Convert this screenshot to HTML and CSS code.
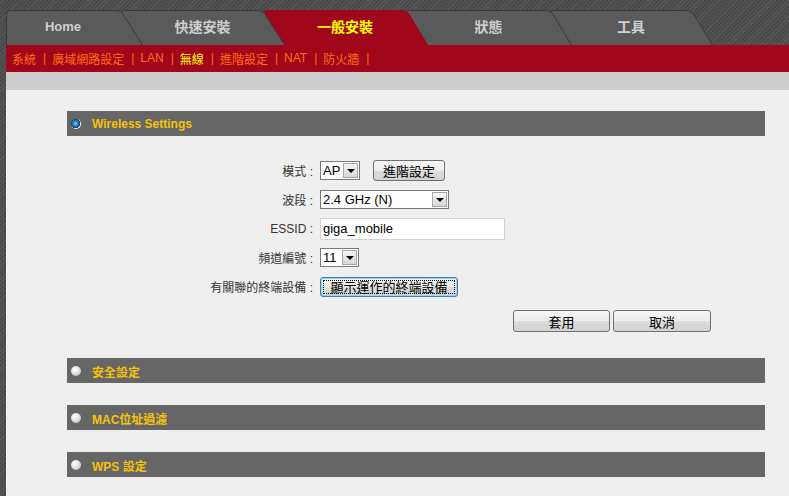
FILE: index.html
```html
<!DOCTYPE html>
<html lang="zh-Hant">
<head>
<meta charset="utf-8">
<title>一般安裝 - 無線</title>
<link rel="stylesheet" href="styles.css">
</head>
<body>
<div class="page">
  <nav class="tabs">
    <a class="tab tab-home">
      <svg class="tab-bg" width="137" height="35" viewBox="0 0 137 35"><path d="M0.5 35 V5 Q0.5 0.5 5 0.5 H110 Q115 0.5 117.5 5 L136.5 35" /></svg>
      <span class="tab-label">Home</span>
    </a>
    <a class="tab">
      <svg class="tab-bg" width="165" height="35" viewBox="0 0 165 35"><path d="M0.5 35 V5 Q0.5 0.5 5 0.5 H138 Q143 0.5 145.5 5 L164.5 35" /></svg>
      <span class="tab-label">快速安裝</span>
    </a>
    <a class="tab tab-active">
      <svg class="tab-bg" width="166" height="35" viewBox="0 0 166 35"><path d="M0.5 35 V5 Q0.5 0.5 5 0.5 H139 Q145 0.5 147.5 5 L165.5 35" /></svg>
      <span class="tab-label">一般安裝</span>
    </a>
    <a class="tab">
      <svg class="tab-bg" width="167" height="35" viewBox="0 0 167 35"><path d="M0.5 35 V5 Q0.5 0.5 5 0.5 H140 Q146 0.5 148.5 5 L166.5 35" /></svg>
      <span class="tab-label">狀態</span>
    </a>
    <a class="tab">
      <svg class="tab-bg" width="164" height="35" viewBox="0 0 164 35"><path d="M0.5 35 V5 Q0.5 0.5 5 0.5 H136 Q142 0.5 145 5 L163.5 35" /></svg>
      <span class="tab-label">工具</span>
    </a>
  </nav>

  <div class="subnav">
    <a class="sub">系統</a><span class="sep">|</span>
    <a class="sub">廣域網路設定</a><span class="sep">|</span>
    <a class="sub">LAN</a><span class="sep">|</span>
    <a class="sub sub-active">無線</a><span class="sep">|</span>
    <a class="sub">進階設定</a><span class="sep">|</span>
    <a class="sub">NAT</a><span class="sep">|</span>
    <a class="sub">防火牆</a><span class="sep">|</span>
  </div>

  <div class="graybar"></div>

  <main class="content">
    <section class="panel">
      <div class="panel-head"><span class="dot dot-on"></span><span class="panel-title">Wireless Settings</span></div>
      <div class="form">
        <div class="label">模式 :</div>
        <div class="ctrl">
          <span class="select select-ap"><span class="select-text">AP</span><span class="arrow"></span></span>
          <button class="btn btn-adv">進階設定</button>
        </div>

        <div class="label">波段 :</div>
        <div class="ctrl">
          <span class="select select-band"><span class="select-text">2.4 GHz (N)</span><span class="arrow"></span></span>
        </div>

        <div class="label">ESSID :</div>
        <div class="ctrl">
          <span class="input">giga_mobile</span>
        </div>

        <div class="label">頻道編號 :</div>
        <div class="ctrl">
          <span class="select select-ch"><span class="select-text">11</span><span class="arrow"></span></span>
        </div>

        <div class="label">有關聯的終端設備 :</div>
        <div class="ctrl">
          <button class="btn btn-focus"><span class="focus-ring">顯示運作的終端設備</span></button>
        </div>
      </div>
      <div class="actions">
        <button class="btn btn-act">套用</button>
        <button class="btn btn-act btn-cancel">取消</button>
      </div>
    </section>

    <section class="panel panel-closed">
      <div class="panel-head"><span class="dot"></span><span class="panel-title">安全設定</span></div>
    </section>
    <section class="panel panel-closed">
      <div class="panel-head"><span class="dot"></span><span class="panel-title">MAC位址過濾</span></div>
    </section>
    <section class="panel panel-closed">
      <div class="panel-head"><span class="dot"></span><span class="panel-title">WPS 設定</span></div>
    </section>
  </main>
</div>
</body>
</html>
```

FILE: styles.css
```css
* { box-sizing: border-box; }

html, body {
  margin: 0;
  padding: 0;
  width: 789px;
  height: 496px;
  overflow: hidden;
}

body {
  font-family: "Liberation Sans", Arial, "Noto Sans CJK TC", sans-serif;
  font-size: 12px;
  color: #333;
  background-color: #4c4c4c;
  background-image: repeating-linear-gradient(135deg, #4a4a4a 0px, #4a4a4a 2px, #585858 2px, #585858 3px);
}

.page {
  padding-left: 6px;
  height: 496px;
  display: flex;
  flex-direction: column;
}

/* ---------- tabs ---------- */
.tabs {
  display: flex;
  height: 35px;
  margin-top: 10px;
  flex: none;
}

.tab {
  position: relative;
  display: flex;
  align-items: center;
  justify-content: center;
  height: 35px;
  margin-left: -23px;
  padding: 0 23px 3px 23px;
  font-weight: bold;
  font-size: 14px;
  color: #cfcfcf;
  text-decoration: none;
  flex: none;
}
.tab:nth-child(1) { z-index: 5; width: 137px; margin-left: 0; padding-left: 0; font-size: 13px; }
.tab:nth-child(2) { z-index: 4; width: 165px; }
.tab:nth-child(3) { z-index: 3; width: 166px; }
.tab:nth-child(4) { z-index: 2; width: 167px; }
.tab:nth-child(5) { z-index: 1; width: 164px; }

.tab-bg {
  position: absolute;
  left: 0;
  top: 0;
  display: block;
}
.tab-bg path {
  fill: #5b5a5a;
  stroke: #3a3a3a;
  stroke-width: 1;
}
.tab-active .tab-bg path {
  fill: #a0071b;
  stroke: #a0071b;
}
.tab-label {
  position: relative;
}
.tab-active { color: #ffff00; }

/* ---------- sub nav ---------- */
.subnav {
  flex: none;
  height: 27px;
  background: #a0071b;
  display: flex;
  align-items: center;
  padding: 0 0 1px 6px;
  color: #ff6d10;
  font-size: 12px;
}
.sub { color: #ff6d10; text-decoration: none; }
.sub-active { color: #ffff00; }
.sep { margin: 0 6px 0 7px; }

.graybar {
  flex: none;
  height: 18px;
  background: #cdcdcd;
}

/* ---------- content ---------- */
.content {
  flex: 1;
  background: #efefef;
  padding: 21px 24px 0 61px;
}

.panel-head {
  height: 25px;
  background: #666666;
  display: flex;
  align-items: center;
  padding-left: 4px;
}
.panel-title {
  font-weight: bold;
  font-size: 12px;
  color: #f5c30a;
  margin-left: 11px;
  padding-top: 1px;
}

.dot {
  width: 10px;
  height: 10px;
  border-radius: 50%;
  background: radial-gradient(circle at 40% 35%, #ffffff 0%, #e2e2e2 45%, #a8a8a8 100%);
  flex: none;
}
.dot-on {
  background: radial-gradient(circle at 45% 45%, #7cc7f2 0%, #1f6fa8 40%, #0d3f66 58%, #ffffff 62%, #e6e6e6 80%, #b8b8b8 100%);
}

.panel-closed { margin-top: 22px; }
.panel:first-child + .panel-closed { margin-top: 26px; }

/* ---------- form ---------- */
.form {
  display: grid;
  grid-template-columns: 246px auto;
  column-gap: 7px;
  grid-auto-rows: 29px;
  margin-top: 20px;
}
.label {
  text-align: right;
  align-self: center;
  font-size: 12px;
  color: #333;
}
.ctrl {
  display: flex;
  align-items: center;
}

.select {
  display: inline-flex;
  align-items: center;
  height: 19px;
  border: 1px solid #7a7a7a;
  background: #fff;
  font-size: 13px;
  color: #000;
}
.select-text {
  flex: 1;
  padding-left: 2px;
  white-space: nowrap;
}
.select-ap { width: 40px; }
.select-band { width: 129px; }
.select-ch { width: 39px; }

.arrow {
  position: relative;
  width: 15px;
  height: 15px;
  margin-right: 1px;
  border: 1px solid #a6a6a6;
  background: linear-gradient(#f6f6f6, #d6d6d6);
  flex: none;
}
.arrow::after {
  content: "";
  position: absolute;
  left: 3px;
  top: 5px;
  border-left: 4px solid transparent;
  border-right: 4px solid transparent;
  border-top: 4px solid #000;
}

.input {
  display: flex;
  align-items: center;
  width: 185px;
  height: 22px;
  border: 1px solid #d4d4d4;
  background: #fff;
  padding-left: 2px;
  font-size: 13px;
  color: #000;
}

.btn {
  font-family: "Liberation Sans", Arial, "Noto Sans CJK TC", sans-serif;
  font-size: 13px;
  color: #000;
  border: 1px solid #707070;
  border-radius: 3px;
  background: linear-gradient(#f6f6f6 0%, #ebebeb 50%, #dcdcdc 51%, #d2d2d2 100%);
  padding: 0;
  display: inline-flex;
  align-items: center;
  justify-content: center;
}
.btn-adv {
  width: 72px;
  height: 21px;
  margin-left: 13px;
}
.btn-focus {
  width: 138px;
  height: 20px;
  border-color: #3c7fb1;
  box-shadow: inset 0 0 0 1px #9bd3f2;
  padding: 2px;
}
.focus-ring {
  display: flex;
  align-items: center;
  justify-content: center;
  width: 100%;
  height: 100%;
  outline: 1px dotted #000;
  outline-offset: -1px;
  font-size: 13px;
}

.actions {
  display: flex;
  justify-content: flex-end;
  gap: 3px;
  padding-right: 54px;
  margin-top: 9px;
}
.btn-act {
  width: 97px;
  height: 22px;
}
.btn-cancel { width: 98px; }
```
